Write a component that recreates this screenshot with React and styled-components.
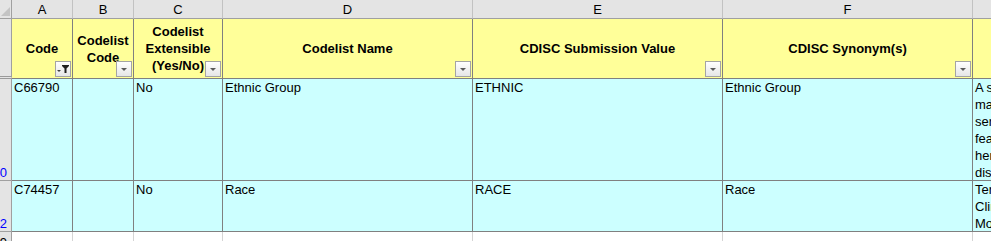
import React from 'react';
import styled, { createGlobalStyle } from 'styled-components';

const GlobalStyle = createGlobalStyle`
  html, body {
    margin: 0;
    padding: 0;
    background: #ffffff;
    overflow: hidden;
  }
  body {
    font-family: 'Liberation Sans', Arial, sans-serif;
  }
`;

const COLS = '12px 61px 61px 89px 250px 250px 250px 300px';

const Sheet = styled.div`
  display: grid;
  grid-template-columns: ${COLS};
  grid-template-rows: 19px 60px 102px 51px 17px;
  width: 1273px;
  font-family: 'Liberation Sans', Arial, sans-serif;
  font-size: 13px;
  color: #000;
`;

const Corner = styled.div`
  position: relative;
  background: #e4e4e4;
  border-right: 1px solid #a0a0a0;
  border-bottom: 1px solid #a0a0a0;
  box-sizing: border-box;
  overflow: hidden;
  &::after {
    content: '';
    position: absolute;
    right: 1px;
    bottom: 2px;
    width: 0;
    height: 0;
    border-left: 9px solid transparent;
    border-bottom: 9px solid #c4c4c4;
  }
`;

const ColLetter = styled.div`
  display: flex;
  align-items: center;
  justify-content: center;
  background: #e4e4e4;
  border-right: 1px solid #c2c2c2;
  border-bottom: 1px solid #a0a0a0;
  box-sizing: border-box;
  font-size: 13px;
  padding-top: 1px;
`;

const RowNum = styled.div`
  display: flex;
  align-items: ${(p) => (p.$top ? 'flex-start' : 'flex-end')};
  justify-content: flex-end;
  background: #e4e4e4;
  border-right: 1px solid #a0a0a0;
  border-bottom: ${(p) => (p.$hidden ? '3px double #9a9a9a' : '1px solid #a0a0a0')};
  box-sizing: border-box;
  overflow: hidden;
  color: ${(p) => (p.$filtered ? '#0000ff' : '#000')};
  font-size: 13px;
  line-height: 15px;
  padding-right: 4px;
  padding-top: ${(p) => (p.$top ? '3px' : '0')};
  white-space: nowrap;
`;

const HeadCell = styled.div`
  position: relative;
  display: flex;
  align-items: center;
  justify-content: center;
  text-align: center;
  background: #ffff99;
  border-right: 1px solid #808080;
  border-bottom: 1px solid #808080;
  box-sizing: border-box;
  font-weight: bold;
  line-height: 17px;
  padding: 0 1px;
  overflow: hidden;
`;

const Cell = styled.div`
  background: ${(p) => (p.$blank ? '#ffffff' : '#ccffff')};
  border-right: 1px solid ${(p) => (p.$blank ? '#d4d4d4' : '#808080')};
  border-bottom: 1px solid ${(p) => (p.$blank ? '#d4d4d4' : '#808080')};
  box-sizing: border-box;
  line-height: 17px;
  padding: 0 2px;
  overflow: hidden;
  white-space: ${(p) => (p.$lines ? 'pre' : 'normal')};
`;

const FilterBtn = styled.div`
  position: absolute;
  right: 1px;
  bottom: 1px;
  width: 16px;
  height: 16px;
  box-sizing: border-box;
  border: 1px solid #a4a4a4;
  background: linear-gradient(#ffffff, #e6e6e6);
  display: flex;
  align-items: center;
  justify-content: center;
`;

const Arrow = () => (
  <svg width="14" height="14" viewBox="0 0 14 14">
    <path d="M4 6 L10 6 L7 9 Z" fill="#5a5a5a" />
  </svg>
);

const Funnel = () => (
  <svg width="14" height="14" viewBox="0 0 14 14">
    <path d="M1 8 L5 8 L3 10 Z" fill="#404040" />
    <path d="M6 3 L13 3 L13 4 L10.5 6.5 L10.5 11 L8.5 11 L8.5 6.5 L6 4 Z" fill="#202020" />
  </svg>
);

const Header = ({ children, filtered }) => (
  <HeadCell>
    <span>{children}</span>
    <FilterBtn>{filtered ? <Funnel /> : <Arrow />}</FilterBtn>
  </HeadCell>
);

const rows = [
  {
    num: '20',
    code: 'C66790',
    ext: 'No',
    name: 'Ethnic Group',
    value: 'ETHNIC',
    syn: 'Ethnic Group',
    def:
      'A social group characterized by a distinctive social and cultural tradition\n' +
      'maintained from generation to generation, a common history and origin and a\n' +
      'sense of identification with the group; members of the group have distinctive\n' +
      'features in their way of life, shared experiences and often a common genetic\n' +
      'heritage; these features may be reflected in their experience of health and\n' +
      'disease. (NCI)',
  },
  {
    num: '22',
    code: 'C74457',
    ext: 'No',
    name: 'Race',
    value: 'RACE',
    syn: 'Race',
    def:
      'Terminology associated with the race codelist of the\n' +
      'Clinical Data Interchange Standards Consortium Study Data Tabulation\n' +
      'Model. (NCI)',
  },
];

export default function App() {
  return (
    <>
      <GlobalStyle />
      <Sheet>
        <Corner />
        {['A', 'B', 'C', 'D', 'E', 'F', 'G'].map((l) => (
          <ColLetter key={l}>{l}</ColLetter>
        ))}

        <RowNum $hidden />
        <Header filtered>Code</Header>
        <Header>Codelist Code</Header>
        <Header>Codelist Extensible (Yes/No)</Header>
        <Header>Codelist Name</Header>
        <Header>CDISC Submission Value</Header>
        <Header>CDISC Synonym(s)</Header>
        <Header>CDISC Definition</Header>

        {rows.map((r) => (
          <React.Fragment key={r.code}>
            <RowNum $filtered>{r.num}</RowNum>
            <Cell>{r.code}</Cell>
            <Cell />
            <Cell>{r.ext}</Cell>
            <Cell>{r.name}</Cell>
            <Cell>{r.value}</Cell>
            <Cell>{r.syn}</Cell>
            <Cell $lines>{r.def}</Cell>
          </React.Fragment>
        ))}

        <RowNum $top>49</RowNum>
        {Array.from({ length: 7 }).map((_, i) => (
          <Cell key={i} $blank />
        ))}
      </Sheet>
    </>
  );
}
